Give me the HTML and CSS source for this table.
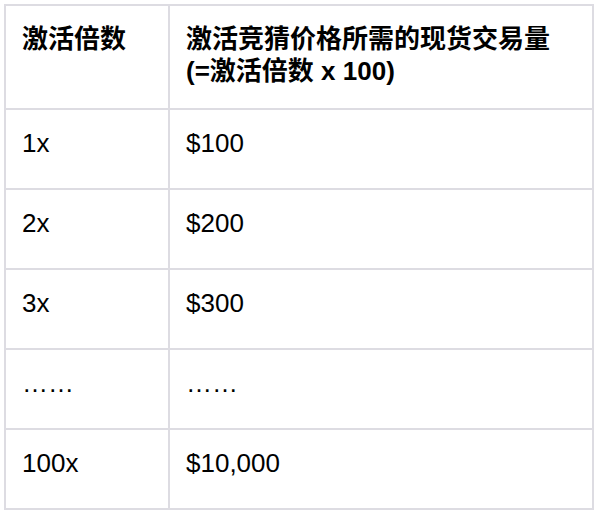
FILE: index.html
```html
<!DOCTYPE html>
<html lang="zh-CN">
<head>
<meta charset="utf-8">
<link rel="stylesheet" href="styles.css">
</head>
<body>
<table class="grid">
  <thead>
    <tr class="head-row">
      <th class="c1">激活倍数</th>
      <th class="c2">激活竞猜价格所需的现货交易量<br>(=激活倍数 x 100)</th>
    </tr>
  </thead>
  <tbody>
    <tr class="row"><td class="c1">1x</td><td class="c2">$100</td></tr>
    <tr class="row"><td class="c1">2x</td><td class="c2">$200</td></tr>
    <tr class="row"><td class="c1">3x</td><td class="c2">$300</td></tr>
    <tr class="row"><td class="c1">……</td><td class="c2">……</td></tr>
    <tr class="row"><td class="c1">100x</td><td class="c2">$10,000</td></tr>
  </tbody>
</table>
</body>
</html>
```
FILE: styles.css
```css
html, body {
  margin: 0;
  background: #ffffff;
}
body {
  padding: 4px;
  font-family: "Liberation Sans", Arial, "Noto Sans CJK SC", sans-serif;
  font-size: 26px;
  line-height: 32px;
  color: #000000;
}
.grid {
  border-collapse: separate;
  border-spacing: 0;
  table-layout: fixed;
  width: 590px;
  border-top: 2px solid #dddce2;
  border-left: 2px solid #dddce2;
}
.grid th, .grid td {
  box-sizing: border-box;
  border-right: 2px solid #dddce2;
  border-bottom: 2px solid #dddce2;
  padding: 17px 16px 0 16px;
  vertical-align: top;
  text-align: left;
}
.grid th {
  font-weight: bold;
  height: 104px;
}
.grid td {
  font-weight: normal;
  height: 80px;
}
.c1 { width: 164px; }
.c2 { width: 424px; }
```
